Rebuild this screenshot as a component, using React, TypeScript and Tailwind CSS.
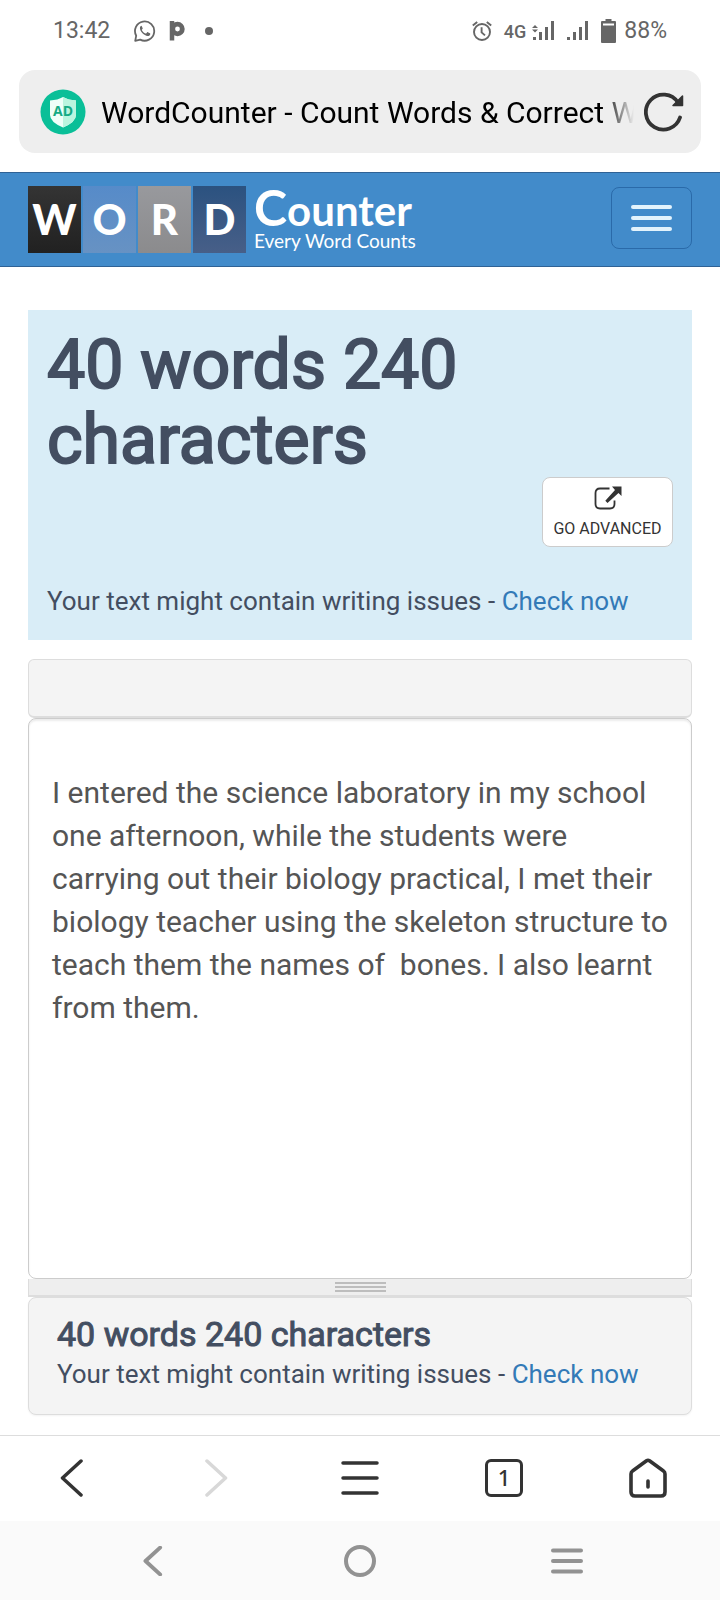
import React, { useState } from 'react'

interface IconProps {
  readonly className?: string
}

const INITIAL_TEXT =
  'I entered the science laboratory in my school one afternoon, while the students were carrying out their biology practical, I met their biology teacher using the skeleton structure to teach them the names of  bones. I also learnt from them.'

const LOGO_TILES = [
  { letter: 'W', className: 'bg-linear-to-b from-[#343434] to-[#212121]' },
  { letter: 'O', className: 'bg-linear-to-b from-[#568bc9] to-[#6792c3]' },
  { letter: 'R', className: 'bg-linear-to-b from-[#98999d] to-[#8b8b8d]' },
  { letter: 'D', className: 'bg-linear-to-b from-[#2b5280] to-[#475f88]' },
]

const ChatIcon = ({ className }: IconProps): React.JSX.Element => (
  <svg className={className} viewBox="0 0 22 22" fill="none" aria-hidden="true">
    <path d="M1.2 20.8 2.2 15.7A9.6 9.6 0 1 1 6.2 19.6Z" stroke="currentColor" strokeWidth="1.8" strokeLinejoin="round" />
    <path
      d="M7.6 5.8c-.6 0-1.7.8-1.7 2.3 0 3.6 4.3 7.7 7.7 7.9 1.5 0 2.7-1 2.7-2.1 0-.4-.1-.5-.4-.7l-2.1-1c-.4-.2-.6 0-.8.2l-.8 1c-.2.2-.4.2-.7.1-1.6-.7-2.8-1.9-3.6-3.3-.1-.3-.1-.4.1-.6l.6-.8c.1-.2.2-.4.1-.6l-.9-2c-.1-.3-.2-.4-.2-.4Z"
      fill="currentColor"
    />
  </svg>
)

const AlarmIcon = ({ className }: IconProps): React.JSX.Element => (
  <svg className={className} viewBox="0 0 20 20" fill="none" stroke="currentColor" strokeWidth="1.9" aria-hidden="true">
    <circle cx="10" cy="11" r="8" />
    <path d="M9.6 6.2v5.2l3.4 3M.8 4.6 5.2 1M19.2 4.6 14.8 1" />
  </svg>
)

const SignalIcon = ({ className }: IconProps): React.JSX.Element => (
  <svg className={className} viewBox="0 0 22 20" fill="currentColor" aria-hidden="true">
    <path d="M0 16h3v3H0zM6 11h3v8H6zM12 6h3v13h-3zM18 0h3v19h-3z" />
  </svg>
)

const DataSignalIcon = ({ className }: IconProps): React.JSX.Element => (
  <svg className={className} viewBox="0 0 22 20" fill="currentColor" aria-hidden="true">
    <path d="M1 16h3v3H1zM7 11h3v8H7zM13 6h3v13h-3zM19 0h3v19h-3zM0 7l3-3 3 3zM0 8.5h6l-3 3z" />
  </svg>
)

const BatteryIcon = ({ className }: IconProps): React.JSX.Element => (
  <svg className={className} viewBox="0 0 15 24" aria-hidden="true">
    <path d="M4.500 0h6v2H14q1 0 1 1v20q0 1-1 1H1q-1 0-1-1V3q0-1 1-1h3.500z" fill="currentColor" />
    <path d="M2 4.500h11v2H2z" fill="#fff" />
  </svg>
)

const ShieldIcon = ({ className }: IconProps): React.JSX.Element => (
  <svg className={className} viewBox="0 0 46 46" role="img" aria-label="AD">
    <circle cx="23" cy="23" r="22.500" fill="#0abf98" />
    <path d="M23 8Q28 11 36 11.500V26Q36 33 23 38.500 10 33 10 26V11.500Q18 11 23 8Z" fill="#effff9" />
    <path d="M23 8Q28 11 36 11.500V26Q36 33 23 38.500Z" fill="#baf5df" />
    <text x="23" y="27" textAnchor="middle" fontFamily="Open Sans, sans-serif" fontWeight="700" fontSize="14" fill="#15ab85">
      AD
    </text>
  </svg>
)

const ReloadIcon = ({ className }: IconProps): React.JSX.Element => (
  <svg className={className} viewBox="0 0 40 40" fill="none" aria-hidden="true">
    <path d="M36 25.500A17.500 17.500 0 1 1 34 10.500" stroke="currentColor" strokeWidth="3.800" strokeLinecap="round" />
    <path d="M38.500 4V13.500H29Z" fill="currentColor" stroke="currentColor" strokeWidth="1.500" strokeLinejoin="round" />
  </svg>
)

const ExternalIcon = ({ className }: IconProps): React.JSX.Element => (
  <svg className={className} viewBox="0 0 28 24" fill="none" aria-hidden="true">
    <path d="M15.500 2.500H6Q1.500 2.500 1.500 7V18Q1.500 22.500 6 22.500H16Q20.500 22.500 20.500 18V14.500" stroke="currentColor" strokeWidth="1.800" />
    <path d="M18 .5H27.500V10L24.500 7 13.500 17 11.300 14.800 21 4Z" fill="currentColor" />
  </svg>
)

const ChevronIcon = ({ className }: IconProps): React.JSX.Element => (
  <svg className={className} viewBox="0 0 24 38" fill="none" stroke="currentColor" strokeLinecap="round" strokeLinejoin="round" aria-hidden="true">
    <path d="M21 2 2.500 19 21 36" />
  </svg>
)

const MenuIcon = ({ className }: IconProps): React.JSX.Element => (
  <svg className={className} viewBox="0 0 38 34" fill="none" stroke="currentColor" strokeWidth="3.500" strokeLinecap="round" aria-hidden="true">
    <path d="M2 2H36M2 17H36M2 32H36" />
  </svg>
)

const HomeIcon = ({ className }: IconProps): React.JSX.Element => (
  <svg className={className} viewBox="0 0 38 40" fill="none" stroke="currentColor" strokeWidth="3.600" strokeLinejoin="round" strokeLinecap="round" aria-hidden="true">
    <path d="M2 16Q2 14 3.500 13L17.500 2.800Q19 1.800 20.500 2.800L34.500 13Q36 14 36 16V34Q36 38 32 38H6Q2 38 2 34Z" />
    <path d="M19 23V29" />
  </svg>
)

const StatusBar = (): React.JSX.Element => (
  <div className="flex h-[70px] items-center justify-between px-[53px] pb-2 text-[23px] text-[#666]">
    <div className="flex items-center">
      <span>13:42</span>
      <ChatIcon className="ml-6 size-[22px]" />
      <svg className="ml-[13px] h-5 w-4" viewBox="0 0 16 20" fill="none" aria-hidden="true">
        <path d="M3 19.500V0" stroke="currentColor" strokeWidth="4.500" />
        <circle cx="8.500" cy="8" r="4.800" stroke="currentColor" strokeWidth="4.800" />
      </svg>
      <span className="ml-5 size-2 rounded-full bg-current" />
    </div>
    <div className="flex items-center">
      <AlarmIcon className="size-5" />
      <span className="ml-3 text-[18px] font-medium">4G</span>
      <DataSignalIcon className="ml-[6px] h-5 w-[22px]" />
      <SignalIcon className="ml-[13px] h-5 w-[22px]" />
      <BatteryIcon className="ml-3 h-6 w-[15px]" />
      <span className="ml-2">88%</span>
    </div>
  </div>
)

const AddressBar = (): React.JSX.Element => (
  <div className="mx-[19px] flex h-[83px] items-center rounded-2xl bg-[#eee] pl-[21px] pr-[17px]">
    <ShieldIcon className="size-[46px] shrink-0" />
    <div className="ml-[15px] min-w-0 flex-1 overflow-hidden whitespace-nowrap mask-r-from-94% mask-r-to-100% pt-[2px] text-[30px] text-black">
      WordCounter - Count Words &amp; Correct Writing
    </div>
    <button type="button" aria-label="Reload" className="ml-[10px] shrink-0 text-[#333]">
      <ReloadIcon className="size-10" />
    </button>
  </div>
)

const Navbar = (): React.JSX.Element => (
  <nav className="mt-[19px] flex h-[95px] items-start justify-between border-y border-[#2f6295] bg-[#428bca] px-7 pt-[13px]">
    <a href="#" className="flex font-[Lato,sans-serif] text-white">
      <span className="flex gap-[2px]">
        {LOGO_TILES.map((tile) => (
          <span
            key={tile.letter}
            className={`flex h-[67px] w-[53px] items-center justify-center text-[42px] font-black ${tile.className}`}
          >
            {tile.letter}
          </span>
        ))}
      </span>
      <span className="ml-2 flex flex-col">
        <span className="text-[42px] leading-[42px] font-bold">
          <span className="text-[50px]">C</span>ounter
        </span>
        <span className="text-[19px] leading-[20px]">Every Word Counts</span>
      </span>
    </a>
    <button
      type="button"
      aria-label="Toggle navigation"
      className="mt-[1px] flex h-[62px] w-[81px] flex-col items-center justify-center gap-[7px] rounded-lg border border-[#2a6aa9]"
    >
      <span className="h-1 w-[41px] rounded-xs bg-[#e3f3fc]" />
      <span className="h-1 w-[41px] rounded-xs bg-[#e3f3fc]" />
      <span className="h-1 w-[41px] rounded-xs bg-[#e3f3fc]" />
    </button>
  </nav>
)

const IssuesNote = (): React.JSX.Element => (
  <p className="text-[26px] leading-[36px] text-[#434e61]">
    Your text might contain writing issues -{' '}
    <a href="#" className="text-[#337ab7]">
      Check now
    </a>
  </p>
)

const Summary = (): React.JSX.Element => (
  <section className="mt-[43px] bg-[#d9edf7] px-[19px] pt-[18px] pb-[21px]">
    <h1 className="text-[68px] leading-[75px] text-[#434e61] [-webkit-text-stroke:2px_#434e61]">40 words 240 characters</h1>
    <div className="-mt-px flex justify-end">
      <button
        type="button"
        className="flex h-[70px] w-[131px] flex-col items-center rounded-lg border border-[#ccc] bg-white pt-2 text-[16px] leading-[24px] text-[#333]"
      >
        <ExternalIcon className="mb-[7px] h-6 w-7" />
        GO ADVANCED
      </button>
    </div>
    <div className="mt-9">
      <IssuesNote />
    </div>
  </section>
)

export default function App(): React.JSX.Element {
  const [text, setText] = useState(INITIAL_TEXT)

  return (
    <div className="flex min-h-screen flex-col bg-white font-[Roboto,sans-serif]">
      <StatusBar />
      <AddressBar />
      <Navbar />

      <main className="px-7">
        <Summary />

        <div className="mt-[19px] h-[59px] rounded-md border border-b-2 border-[#ddd] bg-[#f4f4f4]" />
        <textarea
          aria-label="Your text"
          spellCheck={false}
          value={text}
          onChange={(e) => setText(e.target.value)}
          className="block h-[561px] w-full resize-none rounded-lg border border-[#ccc] bg-white px-[23px] pt-[52px] text-[30px] leading-[43px] text-[#555] shadow-[inset_0_2px_2px_rgba(0,0,0,0.08)] outline-none"
        />
        <div className="flex h-[18px] items-center justify-center border-x border-b-2 border-[#ddd] bg-[#eee]">
          <div className="flex w-[51px] flex-col gap-[2px]">
            <span className="h-[2px] bg-[#bdbdbd]" />
            <span className="h-[2px] bg-[#bdbdbd]" />
            <span className="h-[2px] bg-[#bdbdbd]" />
          </div>
        </div>
        <div className="h-[118px] rounded-lg border border-[#ddd] bg-[#f4f4f4] px-7 pt-4 shadow-xs">
          <h2 className="mb-[2px] text-[34px] leading-[40px] text-[#434e61] [-webkit-text-stroke:1px_#434e61]">
            40 words 240 characters
          </h2>
          <IssuesNote />
        </div>
      </main>

      <footer className="mt-auto">
        <div className="grid h-[86px] grid-cols-5 place-items-center border-t border-[#ddd] pb-[2px] text-[#333]">
          <button type="button" aria-label="Back">
            <ChevronIcon className="h-[38px] w-6 stroke-[3.5]" />
          </button>
          <button type="button" aria-label="Forward" className="text-[#d8d8d8]">
            <ChevronIcon className="h-[38px] w-6 rotate-180 stroke-[3.5]" />
          </button>
          <button type="button" aria-label="Menu">
            <MenuIcon className="h-[34px] w-[38px]" />
          </button>
          <button
            type="button"
            aria-label="Tabs"
            className="flex size-[38px] items-center justify-center rounded-md border-3 border-[#333] font-['Noto_Sans',sans-serif] text-[22px] font-medium"
          >
            1
          </button>
          <button type="button" aria-label="Home">
            <HomeIcon className="h-10 w-[38px]" />
          </button>
        </div>
        <div className="flex h-[79px] items-center justify-between bg-[#fafafa] px-[137px] text-[#929292]">
          <button type="button" aria-label="System back" className="flex w-8 justify-center">
            <ChevronIcon className="h-[30px] w-5 stroke-[5]" />
          </button>
          <button type="button" aria-label="System home" className="size-8 rounded-full border-4 border-current" />
          <button type="button" aria-label="Recent apps" className="flex w-8 justify-center">
            <svg className="h-[26px] w-8" viewBox="0 0 32 26" stroke="currentColor" strokeWidth="4" strokeLinecap="round" aria-hidden="true">
              <path d="M2 2.500H30M2 13H30M2 23.500H30" />
            </svg>
          </button>
        </div>
      </footer>
    </div>
  )
}
